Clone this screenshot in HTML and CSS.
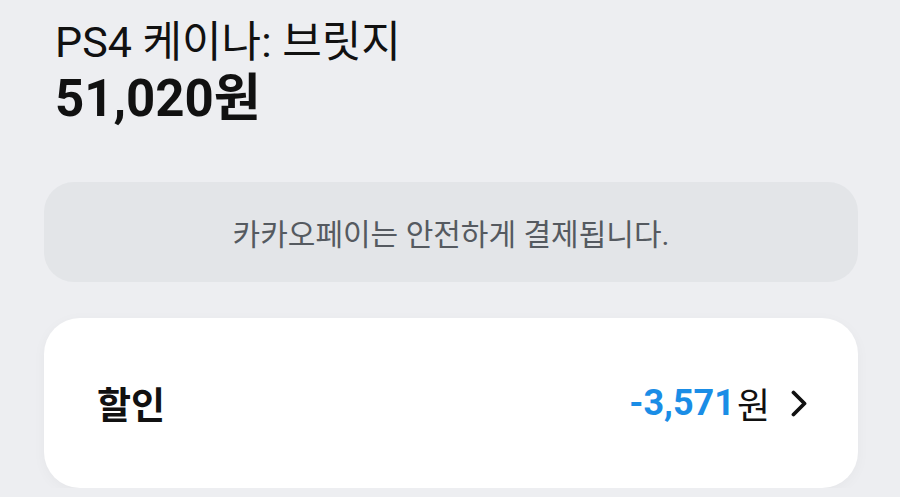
FILE: index.html
```html
<!DOCTYPE html>
<html lang="ko">

<head>
  <meta charset="UTF-8">
  <meta name="viewport" content="width=device-width, initial-scale=1.0">
  <title>결제</title>
  <link rel="stylesheet" href="styles.css">
</head>

<body>
  <div class="page">
    <div class="product">
      <p class="product-name">PS4 케이나: 브릿지</p>
      <p class="product-price">51,020원</p>
    </div>

    <div class="notice">카카오페이는 안전하게 결제됩니다.</div>

    <div class="card">
      <span class="card-label">할인</span>
      <span class="card-value">
        <span class="discount">-3,571</span><span class="won">원</span>
        <svg class="chevron" width="17" height="27" viewBox="0 0 17 27">
          <path d="M2.5 2.5 L13.5 13.5 L2.5 24.5" fill="none" stroke="#111" stroke-width="3.8" stroke-linecap="round" stroke-linejoin="round" />
        </svg>
      </span>
    </div>
  </div>
</body>

</html>
```

FILE: styles.css
```css
body {
  margin: 0;
  background: #edeef1;
  font-family: Roboto, "Noto Sans CJK KR", sans-serif;
  color: #111;
}

.page {
  padding: 0 42px 0 44px;
}

.product {
  padding: 17px 0 0 11px;
}

.product p {
  margin: 0;
}

.product-name {
  font-size: 43px;
  line-height: 50px;
}

.product-price {
  font-size: 51px;
  font-weight: bold;
  line-height: 63px;
}

.notice {
  margin-top: 52px;
  height: 100px;
  border-radius: 30px;
  background: #e3e5e8;
  display: flex;
  align-items: center;
  justify-content: center;
  font-size: 30px;
  color: #555a60;
}

.card {
  margin-top: 36px;
  height: 170px;
  border-radius: 36px;
  background: #fff;
  box-shadow: 0 3px 14px rgba(0, 0, 0, 0.035);
  display: flex;
  align-items: center;
  justify-content: space-between;
  padding: 0 50px 0 53px;
}

.card-label {
  font-size: 37px;
  font-weight: bold;
}

.card-value {
  display: flex;
  align-items: center;
  font-size: 36px;
}

.discount {
  color: #1a8de6;
  font-weight: bold;
}

.won {
  margin-left: 2px;
}

.chevron {
  margin-left: 21px;
}
```
